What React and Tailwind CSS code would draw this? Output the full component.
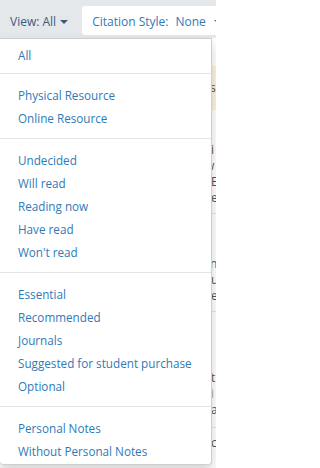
import React from "react";

const groups = [
  ["All"],
  ["Physical Resource", "Online Resource"],
  ["Undecided", "Will read", "Reading now", "Have read", "Won't read"],
  ["Essential", "Recommended", "Journals", "Suggested for student purchase", "Optional"],
  ["Personal Notes", "Without Personal Notes"],
];

function Caret({ className }) {
  return (
    <span
      className={
        "inline-block w-0 h-0 border-l-[4px] border-r-[4px] border-t-[4px] border-l-transparent border-r-transparent " +
        className
      }
    />
  );
}

export default function App() {
  return (
    <div
      className="relative w-[216px] h-[468px] overflow-hidden bg-white text-[12px]"
      style={{ fontFamily: '"Open Sans", "DejaVu Sans", sans-serif' }}
    >
      {/* top toolbar */}
      <div className="h-[38px] bg-[#e5e8eb] flex items-start">
        <div className="flex items-center gap-[4px] pl-[10px] pt-[13px] text-[#3b5b78] leading-[17px] whitespace-nowrap">
          <span>View: All</span>
          <Caret className="border-t-[#3b5b78] mt-[1px]" />
        </div>
        <div className="ml-[14px] mt-[6px] h-[29px] flex-1 bg-white rounded-[3px] flex items-center pl-[10px] pt-[2px] text-[#2f7ab6] whitespace-nowrap">
          <span>Citation Style:</span>
          <span className="ml-[7px]">None</span>
          <Caret className="border-t-[#2f7ab6] ml-[8px]" />
        </div>
      </div>

      {/* underlying page content (mostly hidden by menu) */}
      <div className="flex flex-col text-[#555] leading-[16px] whitespace-nowrap">
        <div className="mt-[28px] h-[44px] bg-[#fcf2dc] pl-[207px] pt-[14px]">
          <span>is</span>
        </div>
        <div className="h-[32px]" />
        <div className="pl-[208px] h-[16px]">li</div>
        <div className="pl-[205px] h-[16px]">w</div>
        <div className="pl-[211px] h-[16px]">E</div>
        <div className="pl-[211px] h-[16px]">e</div>
        <div className="h-[7px]" />
        <div className="ml-[211px] border-t border-[#e5e5e5]" />
        <div className="h-[42px]" />
        <div className="pl-[210px] h-[16px]">n</div>
        <div className="pl-[211px] h-[16px]">u</div>
        <div className="pl-[211px] h-[16px]">e</div>
        <div className="h-[7px]" />
        <div className="ml-[211px] border-t border-[#e5e5e5]" />
        <div className="h-[58px]" />
        <div className="pl-[211px] h-[16px]">t</div>
        <div className="pl-[211px] h-[16px] text-[#aaa]">i</div>
        <div className="pl-[211px] h-[16px]">a</div>
        <div className="h-[9px]" />
        <div className="ml-[211px] border-t border-[#e5e5e5]" />
        <div className="h-[7px]" />
        <div className="pl-[211px] h-[16px]">c</div>
      </div>

      {/* dropdown menu */}
      <div className="absolute left-0 top-[38px] w-[212px] bg-white border border-[#cfcfcf] border-l-0 rounded-b-[4px] pt-[2px] pb-[2px] shadow-[0_6px_12px_rgba(0,0,0,0.175)]">
        {groups.map((g, gi) => (
          <div key={gi}>
            {gi > 0 && <div className="my-[9px] h-px bg-[#e5e5e5]" />}
            {g.map((item) => (
              <div
                key={item}
                className={
                  (gi === 0 ? "pt-[6px] pb-0 " : "pt-[4px] pb-[2px] ") +
                  "h-[23px] pl-[18px] leading-[17px] text-[11.7px] text-[#2f7ab6] whitespace-nowrap"
                }
              >
                {item}
              </div>
            ))}
          </div>
        ))}
      </div>
    </div>
  );
}
